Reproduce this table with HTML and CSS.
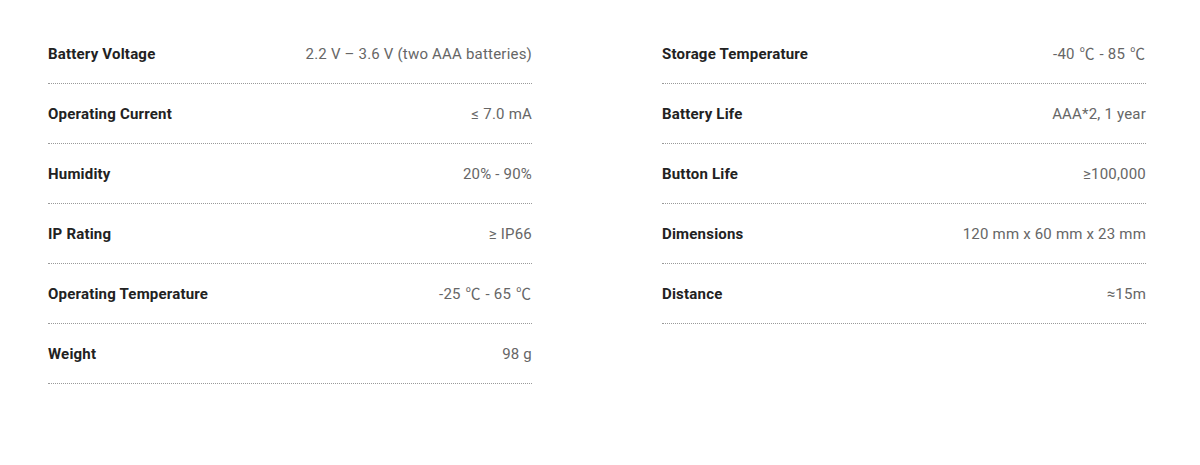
FILE: index.html
```html
<!DOCTYPE html>
<html lang="en">
<head>
<meta charset="utf-8">
<title>Specifications</title>
<link rel="stylesheet" href="styles.css">
</head>
<body>
<div class="specs">
  <div class="col">
    <div class="row"><span class="label">Battery Voltage</span><span class="value">2.2 V – 3.6 V (two AAA batteries)</span></div>
    <div class="row"><span class="label">Operating Current</span><span class="value">≤ 7.0 mA</span></div>
    <div class="row"><span class="label">Humidity</span><span class="value">20% - 90%</span></div>
    <div class="row"><span class="label">IP Rating</span><span class="value">≥ IP66</span></div>
    <div class="row"><span class="label">Operating Temperature</span><span class="value">-25 <span class="deg">℃</span> - 65 <span class="deg">℃</span></span></div>
    <div class="row"><span class="label">Weight</span><span class="value">98 g</span></div>
  </div>
  <div class="col">
    <div class="row"><span class="label">Storage Temperature</span><span class="value">-40 <span class="deg">℃</span> - 85 <span class="deg">℃</span></span></div>
    <div class="row"><span class="label">Battery Life</span><span class="value">AAA*2, 1 year</span></div>
    <div class="row"><span class="label">Button Life</span><span class="value">≥100,000</span></div>
    <div class="row"><span class="label">Dimensions</span><span class="value">120 mm x 60 mm x 23 mm</span></div>
    <div class="row"><span class="label">Distance</span><span class="value">≈15m</span></div>
  </div>
</div>
</body>
</html>
```
FILE: styles.css
```css
html, body {
  margin: 0;
  padding: 0;
  background: #ffffff;
}
body {
  font-family: Roboto, "Liberation Sans", sans-serif;
  font-size: 15px;
  line-height: 20px;
  letter-spacing: 0.2px;
}
.specs {
  display: flex;
  gap: 130px;
  padding: 24px 0 0 48px;
  align-items: flex-start;
}
.col {
  width: 484px;
  display: flex;
  flex-direction: column;
}
.row {
  box-sizing: border-box;
  height: 60px;
  display: flex;
  justify-content: space-between;
  align-items: center;
  padding: 20px 0 19px;
  border-bottom: 1px dotted #9a9a9a;
}
.label {
  font-weight: 700;
  color: #222222;
}
.value {
  color: #666666;
  height: 20px;
}
.deg {
  font-family: "Noto Sans CJK SC", Roboto, sans-serif;
  letter-spacing: 0;
  line-height: 1;
  margin: 0 1px;
}
```
